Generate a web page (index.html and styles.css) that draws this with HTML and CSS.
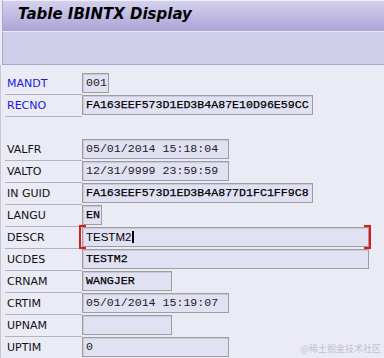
FILE: index.html
```html
<!DOCTYPE html>
<html>
<head>
    <title>Table IBINTX Display</title>
    <meta charset="UTF-8">
    <link rel="stylesheet" href="styles.css">
</head>
<body>
<div class="window">
    <div class="titlebar">
        <h1 class="title">Table IBINTX Display</h1>
    </div>
    <div class="toolbar"></div>

    <div class="form">
        <div class="row"><span class="label key">MANDT</span><span class="field w-client">001</span></div>
        <div class="row"><span class="label key">RECNO</span><span class="field w-guid strong">FA163EEF573D1ED3B4A87E10D96E59CC</span></div>
        <div class="row blank"></div>
        <div class="row"><span class="label">VALFR</span><span class="field w-time">05/01/2014 15:18:04</span></div>
        <div class="row"><span class="label">VALTO</span><span class="field w-time">12/31/9999 23:59:59</span></div>
        <div class="row"><span class="label">IN GUID</span><span class="field w-guid strong">FA163EEF573D1ED3B4A877D1FC1FF9C8</span></div>
        <div class="row"><span class="label">LANGU</span><span class="field w-lang strong">EN</span></div>
        <div class="row"><span class="label">DESCR</span><span class="field w-text edit">TESTM2<i class="cursor"></i></span></div>
        <div class="row"><span class="label">UCDES</span><span class="field w-text strong">TESTM2</span></div>
        <div class="row"><span class="label">CRNAM</span><span class="field w-name strong">WANGJER</span></div>
        <div class="row"><span class="label">CRTIM</span><span class="field w-time">05/01/2014 15:19:07</span></div>
        <div class="row"><span class="label">UPNAM</span><span class="field w-name"></span></div>
        <div class="row"><span class="label">UPTIM</span><span class="field w-time">0</span></div>
    </div>

    <div class="watermark">@稀土掘金技术社区</div>
</div>
</body>
</html>
```

FILE: styles.css
```css
body {
    margin: 0;
    padding: 0;
    background: #ebebf6;
    font-family: 'DejaVu Sans', sans-serif;
    color: #111;
}

.window {
    position: relative;
    height: 358px;
    overflow: hidden;
}

/* шапка окна */
.titlebar {
    height: 30px;
    margin-left: 2px;
    border-left: 1px solid #aaa7cb;
    border-top: 1px solid #efeef9;
    border-bottom: 1px solid #e9e8f5;
    background: linear-gradient(#d4d1ed 0%, #c2bde4 45%, #aba4d5 100%);
}

.title {
    margin: 0;
    padding-left: 15px;
    font-size: 15px;
    line-height: 26px;
    font-weight: bold;
    font-style: italic;
    color: #000;
}

.toolbar {
    height: 32px;
    margin-left: 2px;
    border-left: 1px solid #aaa7cb;
    border-bottom: 1px solid #a8a4cc;
    background: #cfcfe9;
}

/* поля формы */
.form {
    padding: 8px 0 0 4px;
    border-left: 1px solid #c6c6d6;
    height: 300px;
}

.row {
    display: flex;
    height: 22px;
}

.label {
    width: 75px;
    height: 21px;
    padding-left: 2px;
    border-bottom: 1px solid #b3b3c0;
    font-size: 11px;
    line-height: 21px;
    color: #111;
}

.label.key {
    color: #1818e0;
}

.field {
    box-sizing: border-box;
    height: 20px;
    padding: 0 3px;
    border: 1px solid #9e9e9e;
    box-shadow: inset 1px 1px 0 #c9c9d8;
    background: #e1e1f4;
    font-family: 'Liberation Mono', monospace;
    font-size: 11.6px;
    line-height: 18px;
    color: #222;
    white-space: nowrap;
}

.field.strong {
    color: #000;
    -webkit-text-stroke: 0.25px #000;
}

.w-client { width: 27px; }
.w-lang { width: 20px; }
.w-name { width: 90px; }
.w-time { width: 147px; }
.w-guid { width: 231px; }
.w-text { width: 287px; }

.field.edit {
    position: relative;
    font-family: 'Liberation Sans', sans-serif;
    font-size: 11.5px;
    color: #000;
}

.cursor {
    display: inline-block;
    width: 2px;
    height: 12px;
    margin-left: 1px;
    vertical-align: -2px;
    background: #000;
}

.field.edit::before,
.field.edit::after {
    content: "";
    position: absolute;
    top: -3px;
    width: 5px;
    height: 20px;
    border-top: 2px solid #e01818;
    border-bottom: 2px solid #e01818;
}

.field.edit::before {
    left: -4px;
    border-left: 2px solid #e01818;
}

.field.edit::after {
    right: -3px;
    border-right: 2px solid #e01818;
}

.watermark {
    position: absolute;
    right: 3px;
    bottom: 3px;
    font-family: 'Noto Sans CJK SC', sans-serif;
    font-size: 9px;
    color: #c2c2cc;
}
```
